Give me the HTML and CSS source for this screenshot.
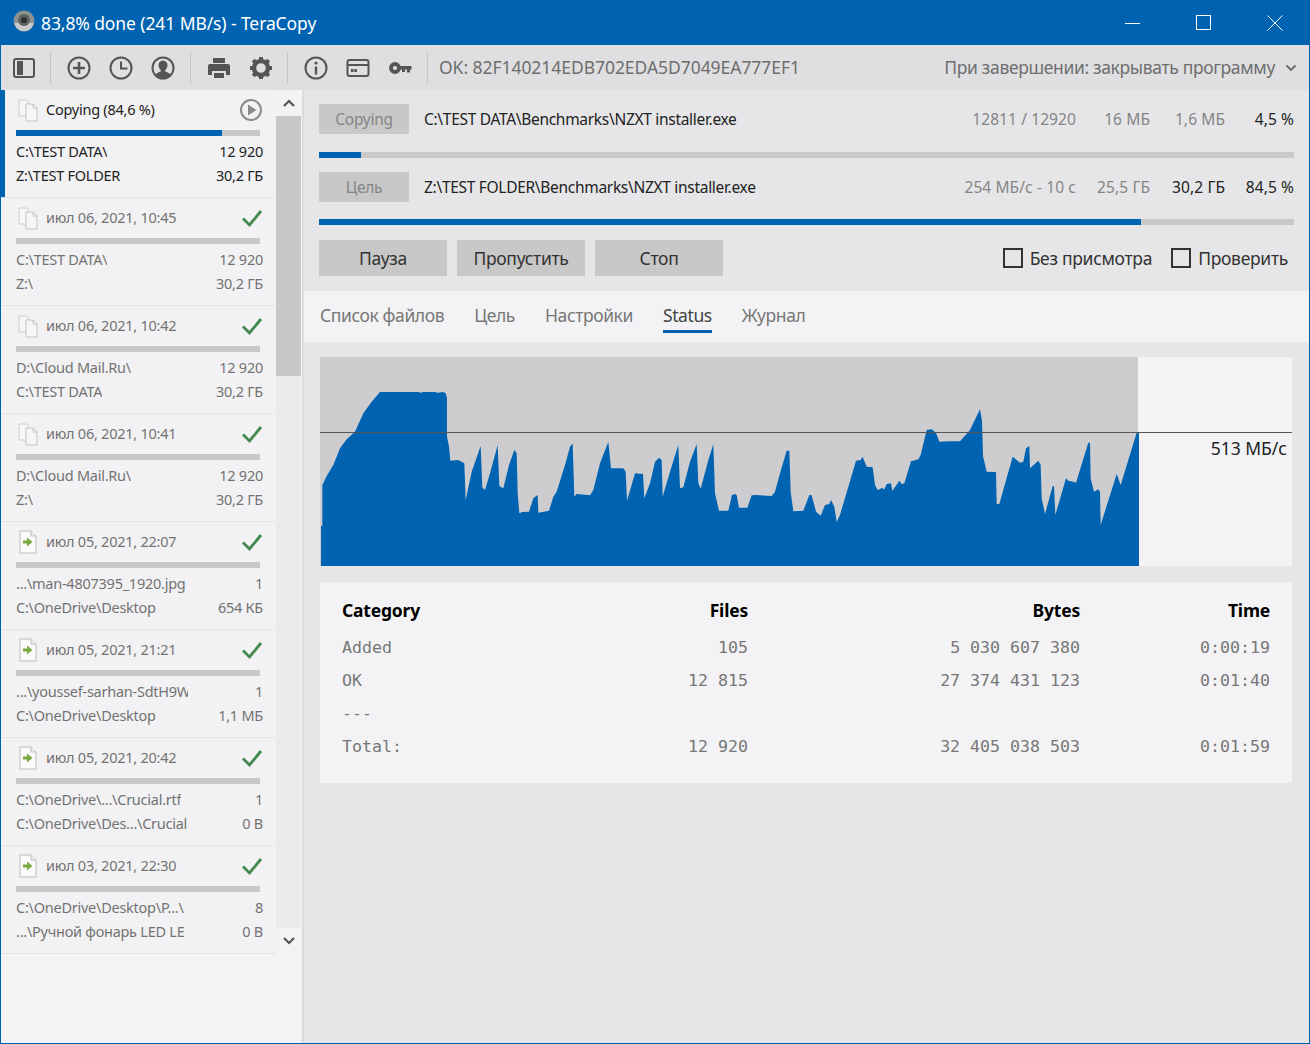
FILE: index.html
```html
<!DOCTYPE html>
<html lang="ru">
<head>
<meta charset="UTF-8">
<meta name="viewport" content="width=device-width, initial-scale=1.0">
<title>TeraCopy</title>
<link rel="stylesheet" href="styles.css">
</head>
<body>
<svg class="defs" width="0" height="0">
  <symbol id="pages" viewBox="0 0 22 24">
    <path d="M2 2h8l1 1v15H2z" fill="#f6f6f8" stroke="#cfcfd1"/>
    <path d="M9 6h7l4 4v13H9z" fill="#f6f6f8" stroke="#c4c4c6"/>
    <path d="M16 6v4h4" fill="none" stroke="#c4c4c6"/>
  </symbol>
  <symbol id="filego" viewBox="0 0 22 24">
    <path d="M3 1h11l5 5v17H3z" fill="#fafafa" stroke="#bdbdbd"/>
    <path d="M14 1v5h5" fill="#eee" stroke="#bdbdbd"/>
    <path d="M6 10.500h4V7.500l5.500 4.500-5.500 4.500v-3H6z" fill="#7aaa45"/>
  </symbol>
  <symbol id="check" viewBox="0 0 22 20">
    <path d="M2 10.500l6.500 6.500L20 3" fill="none" stroke="#43894f" stroke-width="2.800"/>
  </symbol>
</svg>

<div class="window">
  <div class="titlebar">
    <svg class="app-icon" width="22" height="22" viewBox="0 0 22 22">
      <circle cx="11" cy="11" r="10.500" fill="#8c9290"/>
      <path d="M1.500 13a9.600 9.600 0 0 0 19 0z" fill="#c9cbca"/>
      <circle cx="11" cy="10" r="6" fill="#5d6361"/>
      <circle cx="11" cy="10" r="3" fill="#2b2e2d"/>
    </svg>
    <span class="title">83,8% done (241 MB/s) - TeraCopy</span>
    <div class="win-btns">
      <svg width="16" height="16" viewBox="0 0 16 16"><path d="M0 8.500h15" stroke="#fff"/></svg>
      <svg width="16" height="16" viewBox="0 0 16 16"><rect x="0.500" y="0.500" width="14" height="14" fill="none" stroke="#fff"/></svg>
      <svg width="16" height="16" viewBox="0 0 16 16"><path d="M0.500 0.500l15 15M15.500 0.500l-15 15" stroke="#fff"/></svg>
    </div>
  </div>

  <div class="toolbar">
    <div class="tool-group first">
      <svg class="tool" width="24" height="24" viewBox="0 0 24 24"><rect x="2" y="3" width="20" height="18" rx="2" fill="none" stroke="#555" stroke-width="2"/><rect x="5" y="5" width="6" height="14" fill="#555"/></svg>
    </div>
    <div class="tool-group">
      <svg class="tool" width="24" height="24" viewBox="0 0 24 24"><circle cx="12" cy="12" r="10.500" fill="none" stroke="#555" stroke-width="2"/><path d="M12 6v12M6 12h12" stroke="#555" stroke-width="2.600"/></svg>
      <svg class="tool" width="24" height="24" viewBox="0 0 24 24"><circle cx="12" cy="12" r="10.500" fill="none" stroke="#555" stroke-width="2"/><path d="M12 5.500V12.500h6.500" fill="none" stroke="#555" stroke-width="2"/></svg>
      <svg class="tool" width="24" height="24" viewBox="0 0 24 24"><circle cx="12" cy="12" r="10.500" fill="none" stroke="#555" stroke-width="2"/><path d="M12 4.500c-3 0-4.500 2.200-4.500 4.800 0 2 1 3.700 2.200 4.700v1.500c-2 .8-4 1.500-5.200 3a9.500 9.500 0 0 0 15 0c-1.200-1.500-3.200-2.200-5.200-3V14c1.200-1 2.200-2.700 2.200-4.700 0-2.600-1.500-4.800-4.500-4.800z" fill="#555"/></svg>
    </div>
    <div class="tool-group narrow">
      <svg class="tool" width="24" height="24" viewBox="0 0 24 24"><path d="M6 2h12v5H6z" fill="#555"/><path d="M3 8h18a2 2 0 0 1 2 2v9h-4v-4H5v4H1v-9a2 2 0 0 1 2-2z" fill="#555"/><path d="M7 17h10v5H7z" fill="#555"/></svg>
      <svg class="tool" width="24" height="24" viewBox="0 0 24 24"><circle cx="12" cy="12" r="7" fill="none" stroke="#555" stroke-width="4.400"/><path d="M12 1v5M12 18v5M1 12h5M18 12h5M4.200 4.200l3.500 3.500M16.300 16.300l3.500 3.500M19.800 4.200l-3.500 3.500M7.700 16.300l-3.500 3.500" stroke="#555" stroke-width="4"/></svg>
    </div>
    <div class="tool-group">
      <svg class="tool" width="24" height="24" viewBox="0 0 24 24"><circle cx="12" cy="12" r="10.500" fill="none" stroke="#555" stroke-width="2"/><path d="M12 10.500v8" stroke="#555" stroke-width="2.400"/><circle cx="12" cy="7" r="1.600" fill="#555"/></svg>
      <svg class="tool" width="24" height="24" viewBox="0 0 24 24"><rect x="1.500" y="4" width="21" height="16" rx="2" fill="none" stroke="#555" stroke-width="2"/><path d="M2 9h20" stroke="#555" stroke-width="2"/><path d="M5 14.500h6" stroke="#555" stroke-width="3" stroke-dasharray="2.600 .8"/></svg>
      <svg class="tool" width="24" height="24" viewBox="0 0 24 24"><circle cx="7" cy="12" r="4" fill="none" stroke="#555" stroke-width="3.800"/><path d="M10 10h13.500v3.500H22v3h-3v-3h-2v2.500h-3v-2.500h-4z" fill="#555"/></svg>
    </div>
    <span class="hash">OK: 82F140214EDB702EDA5D7049EA777EF1</span>
    <span class="finish">При завершении: закрывать программу</span>
    <svg class="finish-arrow" width="12" height="8" viewBox="0 0 12 8"><path d="M1.500 1.500L6 6l4.500-4.500" fill="none" stroke="#666" stroke-width="1.800"/></svg>
  </div>

  <div class="content">
    <div class="sidebar">
      <div class="jobs">
        <div class="job active">
          <div class="job-head">
            <svg class="job-icon" width="22" height="24"><use href="#pages"/></svg>
            <span class="job-name">Copying (84,6 %)</span>
            <svg class="job-state" width="24" height="24" viewBox="0 0 24 24"><circle cx="12" cy="12" r="10" fill="none" stroke="#8a8a8a" stroke-width="2"/><path d="M9 6.500l8.500 5.500L9 17.500z" fill="#8a8a8a"/></svg>
          </div>
          <div class="bar"><div class="bar-fill" style="width:84.6%"></div></div>
          <div class="job-line"><span class="job-path">C:\TEST DATA\</span><span>12 920</span></div>
          <div class="job-line"><span class="job-path">Z:\TEST FOLDER</span><span>30,2 ГБ</span></div>
        </div>
        <div class="job">
          <div class="job-head">
            <svg class="job-icon" width="22" height="24"><use href="#pages"/></svg>
            <span class="job-name">июл 06, 2021, 10:45</span>
            <svg class="job-state" width="22" height="20"><use href="#check"/></svg>
          </div>
          <div class="bar"></div>
          <div class="job-line"><span class="job-path">C:\TEST DATA\</span><span>12 920</span></div>
          <div class="job-line"><span class="job-path">Z:\</span><span>30,2 ГБ</span></div>
        </div>
        <div class="job">
          <div class="job-head">
            <svg class="job-icon" width="22" height="24"><use href="#pages"/></svg>
            <span class="job-name">июл 06, 2021, 10:42</span>
            <svg class="job-state" width="22" height="20"><use href="#check"/></svg>
          </div>
          <div class="bar"></div>
          <div class="job-line"><span class="job-path">D:\Cloud Mail.Ru\</span><span>12 920</span></div>
          <div class="job-line"><span class="job-path">C:\TEST DATA</span><span>30,2 ГБ</span></div>
        </div>
        <div class="job">
          <div class="job-head">
            <svg class="job-icon" width="22" height="24"><use href="#pages"/></svg>
            <span class="job-name">июл 06, 2021, 10:41</span>
            <svg class="job-state" width="22" height="20"><use href="#check"/></svg>
          </div>
          <div class="bar"></div>
          <div class="job-line"><span class="job-path">D:\Cloud Mail.Ru\</span><span>12 920</span></div>
          <div class="job-line"><span class="job-path">Z:\</span><span>30,2 ГБ</span></div>
        </div>
        <div class="job">
          <div class="job-head">
            <svg class="job-icon" width="22" height="24"><use href="#filego"/></svg>
            <span class="job-name">июл 05, 2021, 22:07</span>
            <svg class="job-state" width="22" height="20"><use href="#check"/></svg>
          </div>
          <div class="bar"></div>
          <div class="job-line"><span class="job-path">...\man-4807395_1920.jpg</span><span>1</span></div>
          <div class="job-line"><span class="job-path">C:\OneDrive\Desktop</span><span>654 КБ</span></div>
        </div>
        <div class="job">
          <div class="job-head">
            <svg class="job-icon" width="22" height="24"><use href="#filego"/></svg>
            <span class="job-name">июл 05, 2021, 21:21</span>
            <svg class="job-state" width="22" height="20"><use href="#check"/></svg>
          </div>
          <div class="bar"></div>
          <div class="job-line"><span class="job-path">...\youssef-sarhan-SdtH9W</span><span>1</span></div>
          <div class="job-line"><span class="job-path">C:\OneDrive\Desktop</span><span>1,1 МБ</span></div>
        </div>
        <div class="job">
          <div class="job-head">
            <svg class="job-icon" width="22" height="24"><use href="#filego"/></svg>
            <span class="job-name">июл 05, 2021, 20:42</span>
            <svg class="job-state" width="22" height="20"><use href="#check"/></svg>
          </div>
          <div class="bar"></div>
          <div class="job-line"><span class="job-path">C:\OneDrive\...\Crucial.rtf</span><span>1</span></div>
          <div class="job-line"><span class="job-path">C:\OneDrive\Des...\Crucial</span><span>0 B</span></div>
        </div>
        <div class="job">
          <div class="job-head">
            <svg class="job-icon" width="22" height="24"><use href="#filego"/></svg>
            <span class="job-name">июл 03, 2021, 22:30</span>
            <svg class="job-state" width="22" height="20"><use href="#check"/></svg>
          </div>
          <div class="bar"></div>
          <div class="job-line"><span class="job-path">C:\OneDrive\Desktop\P...\</span><span>8</span></div>
          <div class="job-line"><span class="job-path">...\Ручной фонарь LED LE</span><span>0 B</span></div>
        </div>
      </div>
      <div class="scrollbar">
        <div class="scroll-btn"><svg width="12" height="8" viewBox="0 0 12 8"><path d="M1 7l5-5 5 5" fill="none" stroke="#555" stroke-width="2.200"/></svg></div>
        <div class="scroll-thumb"></div>
        <div class="scroll-track"></div>
        <div class="scroll-btn"><svg width="12" height="8" viewBox="0 0 12 8"><path d="M1 1l5 5 5-5" fill="none" stroke="#555" stroke-width="2.200"/></svg></div>
      </div>
    </div>

    <div class="main">
      <div class="progress">
        <div class="file-row">
          <span class="chip">Copying</span>
          <span class="file-path">C:\TEST DATA\Benchmarks\NZXT installer.exe</span>
          <span class="stat">12811 / 12920</span>
          <span class="stat size">16 МБ</span>
          <span class="stat total">1,6 МБ</span>
          <span class="stat pct dark">4,5 %</span>
        </div>
        <div class="bar big"><div class="bar-fill" style="width:4.3%"></div></div>
        <div class="file-row">
          <span class="chip">Цель</span>
          <span class="file-path">Z:\TEST FOLDER\Benchmarks\NZXT installer.exe</span>
          <span class="stat">254 МБ/с - 10 с</span>
          <span class="stat size">25,5 ГБ</span>
          <span class="stat total dark">30,2 ГБ</span>
          <span class="stat pct dark">84,5 %</span>
        </div>
        <div class="bar big"><div class="bar-fill" style="width:84.3%"></div></div>
        <div class="actions">
          <button class="btn">Пауза</button>
          <button class="btn">Пропустить</button>
          <button class="btn">Стоп</button>
          <label class="check first-check"><span class="box"></span>Без присмотра</label>
          <label class="check"><span class="box"></span>Проверить</label>
        </div>
      </div>

      <div class="tabs">
        <span class="tab">Список файлов</span>
        <span class="tab">Цель</span>
        <span class="tab">Настройки</span>
        <span class="tab selected">Status</span>
        <span class="tab">Журнал</span>
      </div>

      <div class="graph">
        <!-- points are in 3x units, right half is shifted by 1245 -->
        <svg width="972" height="209" viewBox="15 21 2916 627" preserveAspectRatio="none">
          <rect x="15" y="21" width="2454" height="627" fill="#cdcdcf"/>
          <polygon fill="#0063b1" points="18,648 18,528 22,528 22,405 35,378 55,345 75,295 95,268 120,245 145,190 170,155 195,126 310,126 316,128 325,126 360,126 368,128 385,126 392,130 396,145 396,260 402,290 406,332 430,330 448,340 452,450 470,365 497,288 502,412 510,420 525,370 548,285 553,408 565,415 582,345 598,300 605,310 608,430 613,490 622,486 642,485 655,445 668,435 670,488 702,482 715,440 725,425 750,345 765,290 773,280 778,440 785,432 825,436 835,420 855,340 880,276 888,355 925,355 932,365 936,452 960,370 984,372 988,445 1005,400 1020,335 1032,323 1040,330 1043,440 1065,365 1090,285 1095,415 1105,412 1125,335 1145,282 1150,400 1157,416 1180,330 1195,283 1200,430 1212,482 1240,482 1250,440 1260,432 1260,648"/>
          <g transform="translate(1245 0)">
            <polygon fill="#0063b1" points="5,648 5,436 15,432 20,435 27,473 52,473 65,436 75,435 125,438 135,425 150,370 170,302 178,302 182,425 190,484 220,482 238,435 245,436 258,485 272,497 285,465 298,462 303,450 313,470 320,516 330,495 378,332 392,330 398,320 410,350 428,352 435,405 443,420 458,413 462,420 470,402 483,400 487,423 508,392 515,402 523,400 543,334 565,328 572,315 590,240 605,238 618,248 628,275 660,274 690,274 720,240 750,178 756,212 759,318 770,365 798,366 800,462 808,462 848,320 870,338 880,335 888,295 898,288 900,355 925,332 932,345 935,445 945,492 968,408 972,408 976,495 1008,385 1015,392 1030,395 1038,398 1075,278 1080,278 1082,385 1092,425 1105,418 1110,425 1112,525 1160,372 1172,405 1220,248 1227,248 1227,648"/>
          </g>
          <path d="M15 247.500H2931" stroke="#555" stroke-width="3"/>
        </svg>
        <span class="speed">513 МБ/с</span>
      </div>

      <div class="stats-panel">
        <table class="stats">
          <thead>
            <tr><th>Category</th><th>Files</th><th>Bytes</th><th>Time</th></tr>
          </thead>
          <tbody>
            <tr><td>Added</td><td>105</td><td>5 030 607 380</td><td>0:00:19</td></tr>
            <tr><td>OK</td><td>12 815</td><td>27 374 431 123</td><td>0:01:40</td></tr>
            <tr><td>---</td><td></td><td></td><td></td></tr>
            <tr><td>Total:</td><td>12 920</td><td>32 405 038 503</td><td>0:01:59</td></tr>
          </tbody>
        </table>
      </div>
    </div>
  </div>
</div>
</body>
</html>
```

FILE: styles.css
```css
* {
  box-sizing: border-box;
}
body {
  margin: 0;
  font-family: "Noto Sans", "Open Sans", sans-serif;
  background-color: #e6e6e8;
}
.defs {
  position: absolute;
}
.window {
  width: 1310px;
  height: 1044px;
  display: flex;
  flex-direction: column;
  border: 1px solid #0063b1;
  border-top: none;
  overflow: hidden;
}

/* title bar */
.titlebar {
  height: 45px;
  flex: none;
  display: flex;
  align-items: center;
  background-color: #0063b1;
  color: #fff;
  padding-left: 12px;
}
.app-icon {
  margin-right: 6px;
  margin-bottom: 3px;
}
.title {
  font-size: 17.500px;
  letter-spacing: -0.1px;
}
.win-btns {
  margin-left: auto;
  display: flex;
  gap: 55px;
  padding-right: 26px;
}

/* toolbar */
.toolbar {
  height: 45px;
  flex: none;
  display: flex;
  align-items: center;
  background-color: #dfdfe1;
  padding-right: 12px;
}
.tool-group {
  height: 32px;
  display: flex;
  align-items: center;
  gap: 18px;
  padding: 0 15px 0 16px;
  border-right: 1px solid #c6c6c8;
}
.tool-group.first {
  padding-left: 11px;
  padding-right: 14px;
}
.tool-group.narrow {
  padding-right: 14px;
}
.hash {
  margin-left: 11px;
  margin-bottom: 2px;
  font-size: 17.500px;
  color: #6e6e6e;
  letter-spacing: -0.05px;
}
.finish {
  margin-left: auto;
  margin-bottom: 2px;
  font-size: 17.500px;
  color: #6e6e6e;
  letter-spacing: -0.35px;
}
.finish-arrow {
  margin-left: 10px;
}

.content {
  flex: 1;
  display: flex;
  min-height: 0;
}

/* job list */
.sidebar {
  width: 303px;
  flex: none;
  display: flex;
  align-items: flex-start;
  background-color: #f3f3f5;
  border-right: 2px solid #dcdcde;
}
.jobs {
  width: 274px;
  flex: none;
}
.job {
  height: 108px;
  padding: 8px 12px 0 15px;
  border-bottom: 1px solid #e3e3e5;
  background-color: #f2f2f4;
  color: #727272;
  font-size: 14.500px;
  letter-spacing: -0.25px;
}
.job.active {
  box-shadow: inset 4px 0 0 #0063b1;
  color: #222;
}
.job-head {
  height: 24px;
  display: flex;
  align-items: center;
  margin-bottom: 8px;
}
.job-icon {
  margin-left: 1px;
  margin-right: 7px;
  flex: none;
}
.job-name {
  margin-bottom: 2px;
}
.job-state {
  margin-left: auto;
}
.bar {
  width: 244px;
  height: 6px;
  background-color: #c8c8c8;
  margin-bottom: 4px;
}
.bar-fill {
  height: 100%;
  background-color: #0063b1;
}
.job-line {
  height: 24px;
  padding-bottom: 2px;
  display: flex;
  justify-content: space-between;
  align-items: center;
}
.job-path {
  max-width: 172px;
  overflow: hidden;
  white-space: nowrap;
}

/* scrollbar */
.scrollbar {
  width: 25px;
  height: 864px;
  margin-left: 1px;
  display: flex;
  flex-direction: column;
}
.scroll-btn {
  height: 26px;
  display: flex;
  align-items: center;
  justify-content: center;
}
.scroll-thumb {
  height: 260px;
  background-color: #c8c8c8;
}
.scroll-track {
  flex: 1;
  background-color: #ebebed;
}

/* main part */
.main {
  flex: 1;
  min-width: 0;
  display: flex;
  flex-direction: column;
}
.progress {
  height: 201px;
  flex: none;
  padding: 14px 15px 0;
}
.file-row {
  height: 30px;
  display: flex;
  align-items: center;
  font-size: 15.500px;
  letter-spacing: -0.3px;
  color: #222;
}
.chip {
  width: 90px;
  height: 30px;
  flex: none;
  display: flex;
  align-items: center;
  justify-content: center;
  background-color: #c8c8c8;
  color: #868686;
}
.file-path {
  margin-left: 15px;
  flex: 1;
}
.stat {
  flex: none;
  text-align: right;
  color: #858585;
  letter-spacing: 0.1px;
}
.stat.size {
  width: 74px;
}
.stat.total {
  width: 75px;
}
.stat.pct {
  width: 69px;
}
.stat.dark {
  color: #222;
}
.bar.big {
  width: 975px;
  margin: 18px 0 14px;
}
.file-row + .bar.big + .file-row + .bar.big {
  margin: 17px 0 15px;
}
.actions {
  height: 36px;
  display: flex;
  align-items: center;
  gap: 10px;
  font-size: 17.500px;
  letter-spacing: -0.3px;
  color: #333;
}
.btn {
  width: 128px;
  height: 36px;
  border: none;
  background-color: #c8c8c8;
  color: #333;
  font: inherit;
  letter-spacing: inherit;
  padding: 0;
}
.check {
  display: flex;
  align-items: center;
  gap: 7px;
  margin-right: 9px;
}
.first-check {
  margin-left: auto;
}
.box {
  width: 20px;
  height: 20px;
  border: 2px solid #333;
}
.check:last-child {
  margin-right: 6px;
}

.tabs {
  height: 51px;
  flex: none;
  display: flex;
  gap: 30px;
  align-items: flex-start;
  padding: 8px 0 0 16px;
  background-color: #f3f3f5;
  font-size: 17.500px;
  letter-spacing: -0.4px;
  color: #777;
}
.tab {
  height: 34px;
  line-height: 33px;
}
.tab.selected {
  color: #444;
  border-bottom: 3px solid #0063b1;
}

/* graph */
.graph {
  position: relative;
  width: 972px;
  height: 209px;
  flex: none;
  margin: 15px 0 16px 16px;
  background-color: #f3f3f5;
}
.graph svg {
  display: block;
}
.speed {
  position: absolute;
  right: 5px;
  top: 79px;
  font-size: 17.500px;
  color: #222;
}

/* totals */
.stats-panel {
  width: 972px;
  height: 201px;
  margin-left: 16px;
  flex: none;
  background-color: #f3f3f5;
}
.stats {
  width: 100%;
  border-collapse: collapse;
  table-layout: fixed;
  font-family: "DejaVu Sans Mono", monospace;
  font-size: 16.600px;
  color: #777;
}
.stats th {
  font-family: "Noto Sans", sans-serif;
  font-size: 17.500px;
  letter-spacing: -0.2px;
  color: #000;
  text-align: right;
  height: 49px;
  padding: 6px 0 0;
}
.stats th:nth-child(1) {
  width: 228px;
  text-align: left;
  padding-left: 22px;
}
.stats th:nth-child(2) {
  width: 200px;
}
.stats th:nth-child(3) {
  width: 332px;
}
.stats th:nth-child(4) {
  padding-right: 22px;
}
.stats td {
  height: 33px;
  padding: 0;
  text-align: right;
  white-space: pre;
}
.stats td:first-child {
  text-align: left;
  padding-left: 22px;
}
.stats td:last-child {
  padding-right: 22px;
}
```
